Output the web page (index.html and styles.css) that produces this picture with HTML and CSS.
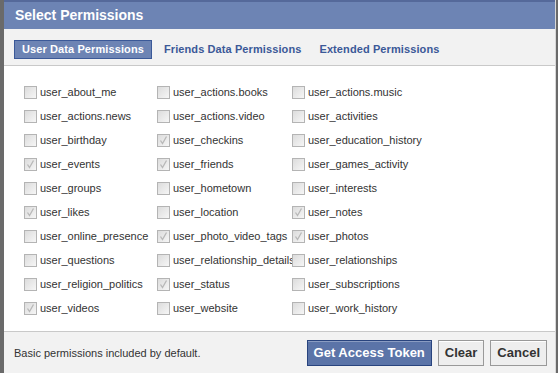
FILE: index.html
```html
<!DOCTYPE html>
<html>
<head>
<meta charset="utf-8">
<link rel="stylesheet" href="styles.css">
</head>
<body>
<div class="dialog">
  <div class="header">Select Permissions</div>
  <div class="tabs">
    <span class="tab active">User Data Permissions</span>
    <span class="tab">Friends Data Permissions</span>
    <span class="tab last">Extended Permissions</span>
  </div>
  <div class="content">
    <div class="grid">
      <label class="perm"><span class="cb"></span>user_about_me</label>
      <label class="perm"><span class="cb"></span>user_actions.books</label>
      <label class="perm"><span class="cb"></span>user_actions.music</label>

      <label class="perm"><span class="cb"></span>user_actions.news</label>
      <label class="perm"><span class="cb"></span>user_actions.video</label>
      <label class="perm"><span class="cb"></span>user_activities</label>

      <label class="perm"><span class="cb"></span>user_birthday</label>
      <label class="perm"><span class="cb on"><svg viewBox="0 0 13 13"><path d="M3.5 6.5 L5.5 9.5 L9.5 2.5"/></svg></span>user_checkins</label>
      <label class="perm"><span class="cb"></span>user_education_history</label>

      <label class="perm"><span class="cb on"><svg viewBox="0 0 13 13"><path d="M3.5 6.5 L5.5 9.5 L9.5 2.5"/></svg></span>user_events</label>
      <label class="perm"><span class="cb on"><svg viewBox="0 0 13 13"><path d="M3.5 6.5 L5.5 9.5 L9.5 2.5"/></svg></span>user_friends</label>
      <label class="perm"><span class="cb"></span>user_games_activity</label>

      <label class="perm"><span class="cb"></span>user_groups</label>
      <label class="perm"><span class="cb"></span>user_hometown</label>
      <label class="perm"><span class="cb"></span>user_interests</label>

      <label class="perm"><span class="cb on"><svg viewBox="0 0 13 13"><path d="M3.5 6.5 L5.5 9.5 L9.5 2.5"/></svg></span>user_likes</label>
      <label class="perm"><span class="cb"></span>user_location</label>
      <label class="perm"><span class="cb on"><svg viewBox="0 0 13 13"><path d="M3.5 6.5 L5.5 9.5 L9.5 2.5"/></svg></span>user_notes</label>

      <label class="perm"><span class="cb"></span>user_online_presence</label>
      <label class="perm"><span class="cb on"><svg viewBox="0 0 13 13"><path d="M3.5 6.5 L5.5 9.5 L9.5 2.5"/></svg></span>user_photo_video_tags</label>
      <label class="perm"><span class="cb on"><svg viewBox="0 0 13 13"><path d="M3.5 6.5 L5.5 9.5 L9.5 2.5"/></svg></span>user_photos</label>

      <label class="perm"><span class="cb"></span>user_questions</label>
      <label class="perm"><span class="cb"></span>user_relationship_details</label>
      <label class="perm"><span class="cb"></span>user_relationships</label>

      <label class="perm"><span class="cb"></span>user_religion_politics</label>
      <label class="perm"><span class="cb on"><svg viewBox="0 0 13 13"><path d="M3.5 6.5 L5.5 9.5 L9.5 2.5"/></svg></span>user_status</label>
      <label class="perm"><span class="cb"></span>user_subscriptions</label>

      <label class="perm"><span class="cb on"><svg viewBox="0 0 13 13"><path d="M3.5 6.5 L5.5 9.5 L9.5 2.5"/></svg></span>user_videos</label>
      <label class="perm"><span class="cb"></span>user_website</label>
      <label class="perm"><span class="cb"></span>user_work_history</label>
    </div>
  </div>
  <div class="footer">
    <span class="note">Basic permissions included by default.</span>
    <div class="buttons">
      <button class="btn primary">Get Access Token</button>
      <button class="btn">Clear</button>
      <button class="btn">Cancel</button>
    </div>
  </div>
</div>
</body>
</html>
```

FILE: styles.css
```css
html, body {
  margin: 0;
  padding: 0;
}
body {
  width: 558px;
  height: 373px;
  overflow: hidden;
  background: #6a6a6a;
  font-family: "Liberation Sans", Arial, sans-serif;
}
.dialog {
  margin-left: 4px;
  width: 551px;
  height: 373px;
  display: flex;
  flex-direction: column;
  background: #fff;
  border-right: 1px solid #d8d8d8;
}
.header {
  height: 27px;
  border-top: 2px solid #55699a;
  background: #6d84b4;
  color: #fff;
  font-weight: bold;
  font-size: 14px;
  line-height: 27px;
  padding-left: 11px;
}
.tabs {
  height: 37px;
  box-sizing: border-box;
  padding: 11px 0 0 10px;
  background: #f2f2f2;
  border-bottom: 1px solid #c9c9c9;
  display: flex;
  gap: 3px;
  align-items: flex-start;
}
.tab {
  font-size: 11px;
  font-weight: bold;
  color: #3b5998;
  padding: 0 8px;
  height: 17px;
  line-height: 17px;
  border: 1px solid transparent;
  letter-spacing: 0.1px;
}
.tab.active {
  background: #6d84b4;
  border-color: #3b5998;
  color: #fff;
  padding: 0 7px;
}
.tab.last {
  margin-left: -3px;
}
.content {
  flex: 1;
  padding: 14px 0 0 20px;
  background: #fff;
}
.grid {
  display: grid;
  grid-template-columns: 133px 135px 1fr;
  grid-auto-rows: 24px;
}
.perm {
  display: flex;
  align-items: center;
  font-size: 11px;
  color: #333;
  white-space: nowrap;
}
.cb {
  width: 11px;
  height: 11px;
  border: 1px solid #b4b4b4;
  background: linear-gradient(135deg, #dcdcdc, #f6f6f6);
  margin-right: 3px;
  flex: none;
  position: relative;
}
.cb svg {
  position: absolute;
  left: -1px;
  top: -1px;
  width: 13px;
  height: 13px;
}
.cb svg path {
  fill: none;
  stroke: #b8b8b8;
  stroke-width: 1.3;
}
.footer {
  height: 42px;
  box-sizing: border-box;
  border-top: 1px solid #c9c9c9;
  background: #f2f2f2;
  display: flex;
  align-items: center;
  justify-content: space-between;
  padding: 0 8px 0 10px;
}
.note {
  font-size: 11px;
  color: #333;
}
.buttons {
  display: flex;
  gap: 6px;
}
.btn {
  font-family: "Liberation Sans", Arial, sans-serif;
  font-size: 13px;
  font-weight: bold;
  height: 26px;
  padding: 0 6px;
  border: 1px solid #999;
  background: #eeeeee;
  color: #333;
  box-shadow: inset 0 1px 0 #fff;
}
.btn.primary {
  background: #5b74a8;
  border-color: #29447e;
  color: #fff;
  box-shadow: inset 0 1px 0 #8a9cc2;
}
```
